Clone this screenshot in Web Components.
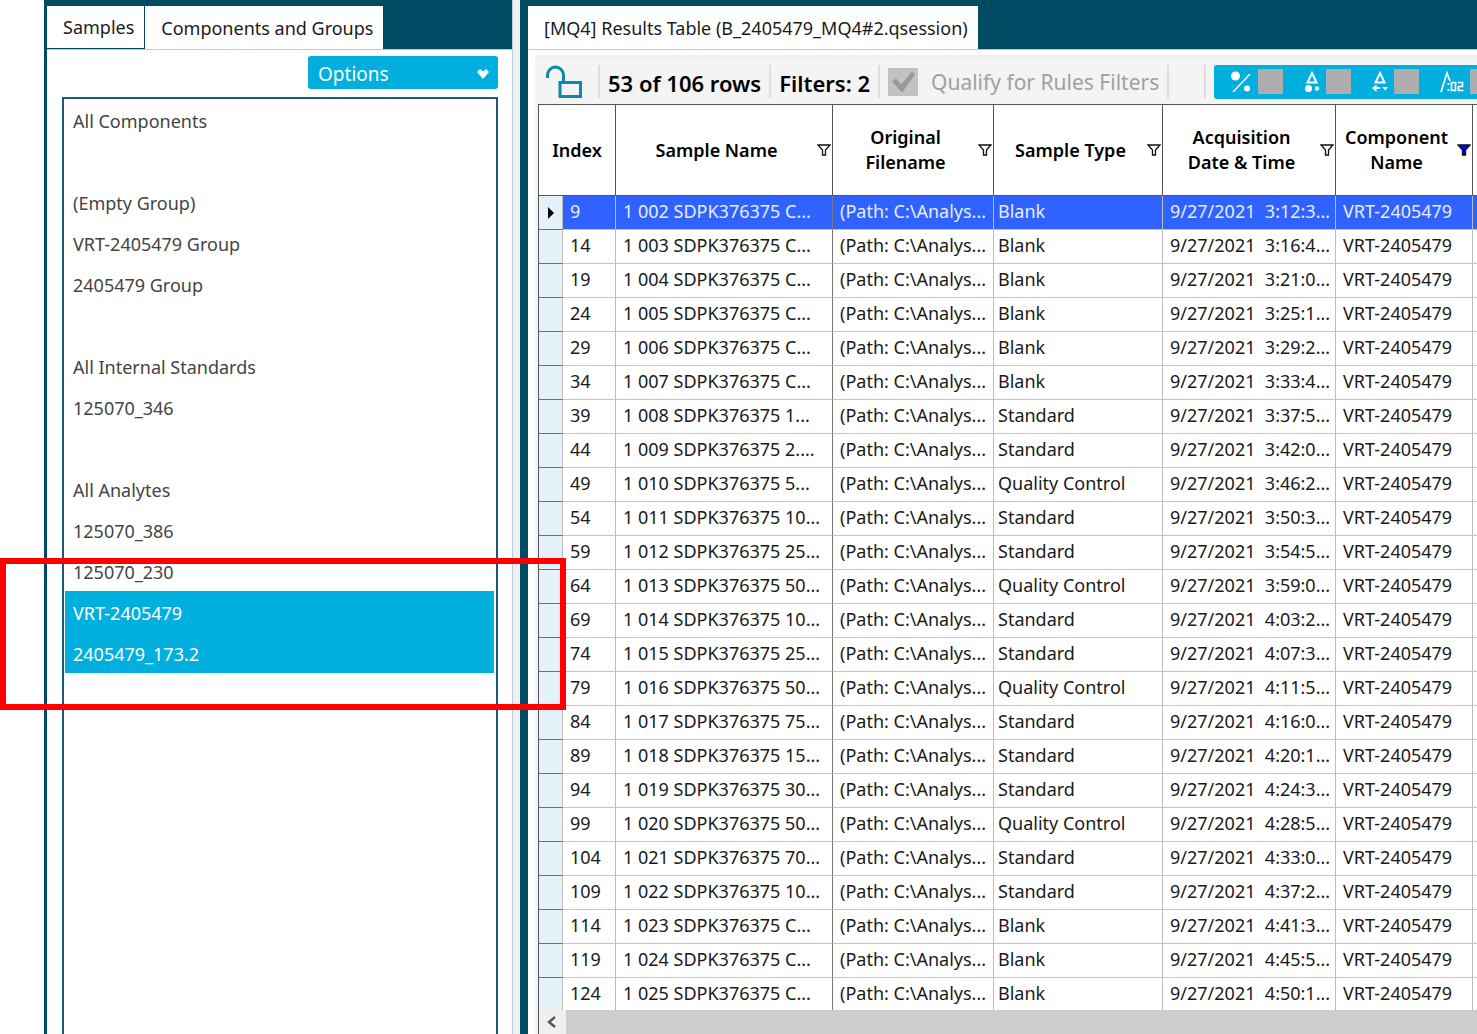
<!DOCTYPE html>
<html lang="en">
<head>
<meta charset="utf-8">
<title>Results Table</title>
<style>
  body {
    margin: 0;
    background: #fff;
    color: #1a1a1a;
    font: 18px/24px "Noto Sans", "Open Sans", sans-serif;
  }
</style>
</head>
<body>
<app-shell>
  <components-panel slot="side"></components-panel>
  <results-pane slot="main"></results-pane>
  <highlight-box slot="overlay"></highlight-box>
</app-shell>

<script>
  class AppShell extends HTMLElement {
    constructor() {
      super();
      const template = document.createElement('template');
      template.innerHTML = `
        <style>
          :host {
            display: flex;
            position: relative;
            height: 100vh;
            padding-left: 44px;
            box-sizing: border-box;
            overflow: hidden;
          }

          .splitter {
            flex: none;
            width: 7px;
            background: #f0f0f0;
          }
        </style>
        <slot name="side"></slot>
        <div class="splitter"></div>
        <slot name="main"></slot>
        <slot name="overlay"></slot>
      `;
      this.attachShadow({ mode: 'open' });
      this.shadowRoot.appendChild(template.content.cloneNode(true));
    }
  }

  customElements.define('app-shell', AppShell);

  // Red callout drawn over both panes
  class HighlightBox extends HTMLElement {
    constructor() {
      super();
      this.attachShadow({ mode: 'open' });
      this.shadowRoot.innerHTML = `
        <style>
          :host {
            position: absolute;
            left: 0;
            top: 558px;
            width: 566px;
            height: 152px;
            box-sizing: border-box;
            border: 6px solid #f00;
            pointer-events: none;
          }
        </style>
      `;
    }
  }

  customElements.define('highlight-box', HighlightBox);

  // Tab in a dark tab strip
  class PaneTab extends HTMLElement {
    constructor() {
      super();
      this.attachShadow({ mode: 'open' });
      this.shadowRoot.innerHTML = `
        <style>
          :host {
            display: flex;
          }

          button {
            height: 43px;
            padding: 0 10px 0 16px;
            border: 0;
            background: #fff;
            color: #1a1a1a;
            font: inherit;
            white-space: nowrap;
          }

          :host([inactive]) button {
            height: 42px;
          }
        </style>
        <button type="button" role="tab"><slot></slot></button>
      `;
    }
  }

  customElements.define('pane-tab', PaneTab);

  class ComponentsPanel extends HTMLElement {
    constructor() {
      super();
      const items = [
        'All Components', '', '(Empty Group)', 'VRT-2405479 Group', '2405479 Group', '',
        'All Internal Standards', '125070_346', '', 'All Analytes', '125070_386',
        '125070_230', 'VRT-2405479', '2405479_173.2'
      ];
      const selected = ['VRT-2405479', '2405479_173.2'];
      const template = document.createElement('template');
      template.innerHTML = `
        <style>
          :host {
            display: flex;
            flex-direction: column;
            flex: none;
            width: 469px;
            box-sizing: border-box;
            border-left: 3px solid #004a64;
            border-right: 1px solid #b7cad6;
          }

          .tabs {
            display: flex;
            align-items: flex-start;
            gap: 1px;
            height: 43px;
            padding-top: 6px;
            background: #004a64;
            border-bottom: 1px solid #b7cad6;
          }

          .body {
            flex: 1;
            display: flex;
            flex-direction: column;
            align-items: flex-end;
            gap: 8px;
            min-height: 0;
            padding: 6px 14px 0 15px;
          }

          .options {
            display: flex;
            flex: none;
            align-items: center;
            justify-content: space-between;
            width: 190px;
            height: 33px;
            padding: 3px 8px 0 10px;
            border: 0;
            border-radius: 3px;
            background: #00afde;
            color: #fff;
            font: inherit;
            font-size: 19px;
          }

          ul {
            flex: 1;
            align-self: stretch;
            min-height: 0;
            margin: 0;
            padding: 0 2px 0 1px;
            border: solid #1d5b74;
            border-width: 2px 2px 0;
            list-style: none;
            color: #444;
          }

          li {
            height: 41px;
            padding: 4px 8px 0;
            box-sizing: border-box;
            line-height: 37px;
          }

          li[aria-selected="true"] {
            background: #00afde;
            color: #fff;
          }
        </style>
        <div class="tabs" role="tablist">
          <pane-tab inactive>Samples</pane-tab>
          <pane-tab>Components and Groups</pane-tab>
        </div>
        <div class="body">
          <button class="options" type="button" aria-haspopup="menu">Options
            <svg width="14" height="12" viewBox="0 0 14 12"><path d="M1 4L4 1L7 3.500L10 1L13 4L7 11Z" fill="#fff"/></svg>
          </button>
          <ul role="listbox" aria-multiselectable="true" aria-label="Components">
            ${items.map(item => `<li role="option" aria-selected="${selected.includes(item)}">${item}</li>`).join('')}
          </ul>
        </div>
      `;
      this.attachShadow({ mode: 'open' });
      this.shadowRoot.appendChild(template.content.cloneNode(true));
    }
  }

  customElements.define('components-panel', ComponentsPanel);

  class ResultsToolbar extends HTMLElement {
    constructor() {
      super();
      const template = document.createElement('template');
      template.innerHTML = `
        <style>
          :host {
            display: flex;
            flex: none;
            align-items: center;
            height: 45px;
            padding-left: 11px;
            border-top: 4px solid #f0f0f0;
            background: #f4f4f4;
            overflow: hidden;
            white-space: nowrap;
            font-size: 21px;
          }

          :host > * {
            flex: none;
          }

          .lock {
            padding: 0;
            margin-right: 15px;
            border: 0;
            background: none;
            display: flex;
          }

          .group {
            display: flex;
            align-items: center;
            height: 33px;
            padding: 0 8px;
            border-left: 2px solid #dcdcdc;
          }

          b {
            padding-top: 2px;
            font-size: 22px;
            font-weight: 600;
            color: #000;
          }

          label {
            display: flex;
            align-items: center;
            gap: 13px;
            color: #a0a0a0;
          }

          .qualify {
            appearance: none;
            width: 30px;
            height: 28px;
            margin: 0;
            background: #c2c2c2;
          }

          .qualify::before {
            content: "";
            display: block;
            width: 30px;
            height: 28px;
            background: #999;
            clip-path: polygon(4px 14px, 8px 11px, 13px 17px, 24px 4px, 27px 7px, 14px 25px);
          }

          .blank {
            width: 19px;
            border-right: 2px solid #dcdcdc;
            margin-right: 8px;
          }

          .flags {
            display: flex;
            align-items: center;
            gap: 21px;
            height: 34px;
            padding: 0 16px;
            border-radius: 3px;
            background: #00afde;
          }

          .flags label {
            gap: 6px;
          }

          .flags input {
            appearance: none;
            width: 25px;
            height: 25px;
            margin: 0;
            background: #adadad;
          }
        </style>
        <button class="lock" type="button" aria-label="Unlock">
          <svg width="37" height="34" viewBox="0 0 37 34" fill="none" stroke="#0b88ab" stroke-width="3">
            <path d="M1.500 13V10.500A8 8.500 0 0 1 17.500 10.500V17"/>
            <rect x="14" y="17.500" width="20.500" height="14"/>
          </svg>
        </button>
        <div class="group"><b>53 of 106 rows</b></div>
        <div class="group"><b>Filters: 2</b></div>
        <div class="group"><label><input class="qualify" type="checkbox" checked disabled>Qualify for Rules Filters</label></div>
        <div class="group blank"></div>
        <div class="flags">
          <label>
            <svg width="22" height="24" viewBox="0 0 22 24"><circle cx="5.500" cy="6" r="4.500" fill="#fff"/><circle cx="17" cy="18.500" r="3" fill="#fff"/><path d="M3 22L20 4" stroke="#fff" stroke-width="1.500"/></svg>
            <input type="checkbox" aria-label="Percent">
          </label>
          <label>
            <svg width="16" height="24" viewBox="0 0 16 24"><path d="M8 3L12.500 12.500H3.500Z" fill="none" stroke="#fff" stroke-width="2"/><circle cx="4.500" cy="18.500" r="3.500" fill="#fff"/><circle cx="13" cy="18.500" r="2.200" fill="#fff"/></svg>
            <input type="checkbox" aria-label="Area">
          </label>
          <label>
            <svg width="16" height="24" viewBox="0 0 16 24"><path d="M8 3L12.500 12.500H3.500Z" fill="none" stroke="#fff" stroke-width="2"/><path d="M0 18L4.500 14.500V17H8V19H4.500V22ZM10 17H16L13.500 20.500Z" fill="#fff"/></svg>
            <input type="checkbox" aria-label="Area ratio">
          </label>
          <label>
            <svg width="24" height="24" viewBox="0 0 24 24" fill="none" stroke="#fff" stroke-width="1.700"><path d="M1 22L7 3L10 11"/><path d="M8.500 13v2M8.500 19v2"/><path d="M11.500 12.500H15.500V20.500H11.500ZM17.500 12.500H22.500V16.500H18.500V20.500H23.500"/></svg>
            <input type="checkbox" aria-label="Retention time">
          </label>
        </div>
      `;
      this.attachShadow({ mode: 'open' });
      this.shadowRoot.appendChild(template.content.cloneNode(true));
    }
  }

  customElements.define('results-toolbar', ResultsToolbar);

  class FilterButton extends HTMLElement {
    constructor() {
      super();
      this.attachShadow({ mode: 'open' });
      this.shadowRoot.innerHTML = `
        <style>
          :host {
            display: flex;
          }

          button {
            display: flex;
            padding: 0;
            border: 0;
            background: none;
          }

          path {
            fill: #fff;
          }

          :host([active]) path {
            fill: #00f;
          }
        </style>
        <button type="button" aria-label="Filter">
          <svg width="14" height="12" viewBox="0 0 14 12"><path d="M1 1H13L8.500 6V11H5.500V6Z" stroke="#111" stroke-width="1.300"/></svg>
        </button>
      `;
    }
  }

  customElements.define('filter-button', FilterButton);

  class ResultsTable extends HTMLElement {
    constructor() {
      super();
      // index, sample name, sample type, time
      const rows = [
        [9, '002 SDPK376375 C...', 'Blank', '3:12:3...'],
        [14, '003 SDPK376375 C...', 'Blank', '3:16:4...'],
        [19, '004 SDPK376375 C...', 'Blank', '3:21:0...'],
        [24, '005 SDPK376375 C...', 'Blank', '3:25:1...'],
        [29, '006 SDPK376375 C...', 'Blank', '3:29:2...'],
        [34, '007 SDPK376375 C...', 'Blank', '3:33:4...'],
        [39, '008 SDPK376375 1...', 'Standard', '3:37:5...'],
        [44, '009 SDPK376375 2....', 'Standard', '3:42:0...'],
        [49, '010 SDPK376375 5...', 'Quality Control', '3:46:2...'],
        [54, '011 SDPK376375 10...', 'Standard', '3:50:3...'],
        [59, '012 SDPK376375 25...', 'Standard', '3:54:5...'],
        [64, '013 SDPK376375 50...', 'Quality Control', '3:59:0...'],
        [69, '014 SDPK376375 10...', 'Standard', '4:03:2...'],
        [74, '015 SDPK376375 25...', 'Standard', '4:07:3...'],
        [79, '016 SDPK376375 50...', 'Quality Control', '4:11:5...'],
        [84, '017 SDPK376375 75...', 'Standard', '4:16:0...'],
        [89, '018 SDPK376375 15...', 'Standard', '4:20:1...'],
        [94, '019 SDPK376375 30...', 'Standard', '4:24:3...'],
        [99, '020 SDPK376375 50...', 'Quality Control', '4:28:5...'],
        [104, '021 SDPK376375 70...', 'Standard', '4:33:0...'],
        [109, '022 SDPK376375 10...', 'Standard', '4:37:2...'],
        [114, '023 SDPK376375 C...', 'Blank', '4:41:3...'],
        [119, '024 SDPK376375 C...', 'Blank', '4:45:5...'],
        [124, '025 SDPK376375 C...', 'Blank', '4:50:1...']
      ];
      const head = (text, active) => `
        <th scope="col"><div class="head"><span>${text}</span><filter-button ${active ? 'active' : ''}></filter-button></div></th>`;
      const template = document.createElement('template');
      template.innerHTML = `
        <style>
          :host {
            display: block;
            flex: 1;
            min-height: 0;
            overflow: hidden;
            border-left: 1px solid #555;
            border-top: 1px solid #555;
            background: #fff;
          }

          table {
            width: 1034px;
            table-layout: fixed;
            border-collapse: separate;
            border-spacing: 0;
          }

          th {
            height: 91px;
            padding: 0;
            box-sizing: border-box;
            border-right: 1px solid #555;
            border-bottom: 1px solid #555;
            font-size: 18px;
            font-weight: 600;
            line-height: 25px;
            color: #000;
          }

          .head {
            display: flex;
            align-items: center;
            padding-right: 1px;
          }

          .head span {
            flex: 1;
          }

          td {
            height: 34px;
            padding: 0 0 3px 7px;
            box-sizing: border-box;
            border-right: 1px solid #bdbdbd;
            border-bottom: 1px solid #c4c4c4;
            overflow: hidden;
            white-space: pre;
          }

          td.type {
            padding-left: 4px;
          }

          td.name {
            border-right-color: #777;
          }

          td.marker {
            padding: 0 0 0 8px;
            background: #e5f1f8;
            border-bottom-color: #4a7a98;
          }

          .marker svg {
            display: block;
          }

          .current {
            color: #e8edff;
          }

          .current td:not(.marker) {
            background: #2f62ff;
          }
        </style>
        <table>
          <colgroup>
            <col style="width: 24px">
            <col style="width: 53px">
            <col style="width: 217px">
            <col style="width: 161px">
            <col style="width: 169px">
            <col style="width: 173px">
            <col style="width: 137px">
            <col style="width: 100px">
          </colgroup>
          <thead>
            <tr>
              <th scope="col" colspan="2">Index</th>
              ${head('Sample Name')}
              ${head('Original<br>Filename')}
              ${head('Sample Type')}
              ${head('Acquisition<br>Date &amp; Time')}
              ${head('Component<br>Name', true)}
              <th></th>
            </tr>
          </thead>
          <tbody>
            ${rows.map(([index, name, type, time], i) => `
              <tr class="${i === 0 ? 'current' : ''}">
                <td class="marker">${i === 0 ? '<svg width="8" height="12" viewBox="0 0 8 12"><path d="M1 0L7 6L1 12Z"/></svg>' : ''}</td>
                <td>${index}</td>
                <td class="name">1 ${name}</td>
                <td>(Path: C:\\Analys...</td>
                <td class="type">${type}</td>
                <td>9/27/2021  ${time}</td>
                <td>VRT-2405479</td>
                <td></td>
              </tr>`).join('')}
          </tbody>
        </table>
      `;
      this.attachShadow({ mode: 'open' });
      this.shadowRoot.appendChild(template.content.cloneNode(true));
    }
  }

  customElements.define('results-table', ResultsTable);

  class ResultsPane extends HTMLElement {
    constructor() {
      super();
      const template = document.createElement('template');
      template.innerHTML = `
        <style>
          :host {
            display: flex;
            flex-direction: column;
            flex: 1;
            min-width: 0;
            border-left: 8px solid #004a64;
          }

          .tabs {
            display: flex;
            flex: none;
            align-items: flex-start;
            height: 43px;
            padding-top: 6px;
            background: #004a64;
            border-bottom: 1px solid #b7cad6;
          }

          .body {
            flex: 1;
            display: flex;
            flex-direction: column;
            min-height: 0;
            margin: 5px 0 0 7px;
          }

          .grid {
            flex: 1;
            display: flex;
            flex-direction: column;
            min-height: 0;
            padding-left: 3px;
            background: #f4f4f4;
          }

          .scroll {
            flex: none;
            display: flex;
            height: 24px;
            border-left: 1px solid #555;
            background: #cdcdcd;
          }

          .scroll button {
            display: flex;
            align-items: center;
            width: 27px;
            padding: 0 8px;
            border: 0;
            background: #f0f0f0;
          }
        </style>
        <div class="tabs" role="tablist">
          <pane-tab>[MQ4] Results Table (B_2405479_MQ4#2.qsession)</pane-tab>
        </div>
        <div class="body">
          <results-toolbar></results-toolbar>
          <div class="grid">
            <results-table></results-table>
            <div class="scroll">
              <button type="button" aria-label="Scroll left">
                <svg width="9" height="12" viewBox="0 0 9 12"><path d="M8 1L2 6L8 11" fill="none" stroke="#555" stroke-width="2.400"/></svg>
              </button>
            </div>
          </div>
        </div>
      `;
      this.attachShadow({ mode: 'open' });
      this.shadowRoot.appendChild(template.content.cloneNode(true));
    }
  }

  customElements.define('results-pane', ResultsPane);
</script>
</body>
</html>
